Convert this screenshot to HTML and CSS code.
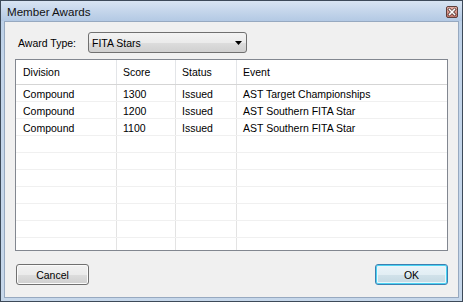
FILE: index.html
```html
<!DOCTYPE html>
<html>
<head>
<meta charset="utf-8">
<link rel="stylesheet" href="styles.css">
</head>
<body>
<div class="window">
  <div class="titlebar">
    <span class="title">Member Awards</span>
    <svg class="close" width="12" height="12" viewBox="0 0 12 12">
      <defs>
        <linearGradient id="cg" x1="0" y1="0" x2="0" y2="1">
          <stop offset="0" stop-color="#e9b4ab"/>
          <stop offset="1" stop-color="#c27267"/>
        </linearGradient>
      </defs>
      <rect x="0.5" y="0.5" width="11" height="11" rx="1.5" fill="url(#cg)" stroke="#5e3f3b"/>
      <path d="M3.5 3.5 L8.5 8.5 M8.5 3.5 L3.5 8.5" stroke="#4a2c28" stroke-width="3" stroke-linecap="square"/>
      <path d="M3.5 3.5 L8.5 8.5 M8.5 3.5 L3.5 8.5" stroke="#ffffff" stroke-width="1.6" stroke-linecap="square"/>
    </svg>
  </div>
  <div class="client">
    <div class="type-row">
      <span class="type-label">Award Type:</span>
      <div class="combo">
        <span class="combo-text">FITA Stars</span>
        <svg class="combo-arrow" width="7" height="4" viewBox="0 0 7 4"><path d="M0 0 H7 L3.5 4 Z" fill="#000"/></svg>
      </div>
    </div>
    <div class="list">
      <div class="grid-row header">
        <div class="cell">Division</div>
        <div class="cell">Score</div>
        <div class="cell">Status</div>
        <div class="cell">Event</div>
      </div>
      <div class="grid-row item">
        <div class="cell">Compound</div>
        <div class="cell">1300</div>
        <div class="cell">Issued</div>
        <div class="cell">AST Target Championships</div>
      </div>
      <div class="grid-row item">
        <div class="cell">Compound</div>
        <div class="cell">1200</div>
        <div class="cell">Issued</div>
        <div class="cell">AST Southern FITA Star</div>
      </div>
      <div class="grid-row item">
        <div class="cell">Compound</div>
        <div class="cell">1100</div>
        <div class="cell">Issued</div>
        <div class="cell">AST Southern FITA Star</div>
      </div>
      <div class="grid-row item"><div class="cell"></div><div class="cell"></div><div class="cell"></div><div class="cell"></div></div>
      <div class="grid-row item"><div class="cell"></div><div class="cell"></div><div class="cell"></div><div class="cell"></div></div>
      <div class="grid-row item"><div class="cell"></div><div class="cell"></div><div class="cell"></div><div class="cell"></div></div>
      <div class="grid-row item"><div class="cell"></div><div class="cell"></div><div class="cell"></div><div class="cell"></div></div>
      <div class="grid-row item"><div class="cell"></div><div class="cell"></div><div class="cell"></div><div class="cell"></div></div>
      <div class="grid-row item"><div class="cell"></div><div class="cell"></div><div class="cell"></div><div class="cell"></div></div>
      <div class="grid-row filler"><div class="cell"></div><div class="cell"></div><div class="cell"></div><div class="cell"></div></div>
    </div>
    <div class="buttons">
      <button class="btn">Cancel</button>
      <button class="btn default">OK</button>
    </div>
  </div>
</div>
</body>
</html>
```
FILE: styles.css
```css
* { box-sizing: border-box; }
html, body { margin: 0; padding: 0; }
body {
  width: 463px;
  height: 302px;
  font-family: "Liberation Sans", Arial, sans-serif;
  font-size: 10.5px;
  color: #000;
  overflow: hidden;
}
.window {
  width: 463px;
  height: 302px;
  border: 1px solid #3d4a59;
  background: linear-gradient(to bottom, #d3e0ef 0px, #bcd0e7 20px, #c3d5ea 60px, #c6d7ea 100%);
  display: flex;
  flex-direction: column;
  padding: 0 3px 3px 3px;
}
.titlebar {
  height: 20px;
  margin: 0 -3px;
  padding: 0 4px 0 6px;
  display: flex;
  justify-content: space-between;
  align-items: flex-start;
  background: linear-gradient(to bottom, #d8e4f2 0%, #c5d6eb 50%, #b3c9e4 100%);
}
.title {
  font-size: 11.6px;
  line-height: 21px;
  color: #111;
}
.close {
  margin-top: 5px;
  display: block;
}
.client {
  flex: 1;
  border: 1px solid #97a9c0;
  background: #f0f0f0;
  padding: 10px 10px 0 10px;
  display: flex;
  flex-direction: column;
}
.type-row {
  display: flex;
  align-items: center;
  height: 21px;
}
.type-label {
  width: 70px;
  margin-left: 3px;
}
.combo {
  width: 159px;
  height: 21px;
  border: 1px solid #707070;
  border-radius: 3px;
  background: linear-gradient(to bottom, #f3f3f3 0%, #ebebeb 50%, #dddddd 51%, #d0d0d0 100%);
  display: flex;
  align-items: center;
  justify-content: space-between;
  padding: 0 4px 0 3px;
}
.combo-arrow { display: block; margin-top: 1px; }
.list {
  margin-top: 6px;
  width: 433px;
  height: 192px;
  border: 1px solid #828790;
  background: #fff;
  display: flex;
  flex-direction: column;
  overflow: hidden;
}
.grid-row {
  display: grid;
  grid-template-columns: 101px 59px 61px 1fr;
}
.cell {
  border-right: 1px solid #e3e3e3;
  padding-left: 6px;
  white-space: nowrap;
  overflow: hidden;
}
.cell:first-child { padding-left: 7px; }
.cell:last-child { border-right: none; }
.header {
  height: 25px;
  border-bottom: 1px solid #d5d5d5;
  line-height: 24px;
}
.header .cell { border-right-color: #e3e5e8; }
.item {
  height: 17px;
  border-bottom: 1px solid #f0f0f0;
  line-height: 18px;
}
.filler { flex: 1; }
.buttons {
  margin-top: 13px;
  display: flex;
  justify-content: space-between;
  padding-left: 1px;
}
.btn {
  width: 73px;
  height: 21px;
  font-family: "Liberation Sans", Arial, sans-serif;
  font-size: 10.5px;
  color: #000;
  border: 1px solid #707070;
  border-radius: 3px;
  background: linear-gradient(to bottom, #f2f2f2 0%, #ebebeb 50%, #dddddd 51%, #cfcfcf 100%);
  padding: 0;
  box-shadow: inset 0 0 0 1px #fbfbfb;
}
.btn.default {
  border-color: #3c7fb1;
  box-shadow: inset 0 0 0 1px #4ad2f2, inset 0 0 0 2px #e8f6fb;
  background: linear-gradient(to bottom, #eaf4f9 0%, #e2eef4 50%, #d1e2ea 51%, #c4d8e2 100%);
}
```
